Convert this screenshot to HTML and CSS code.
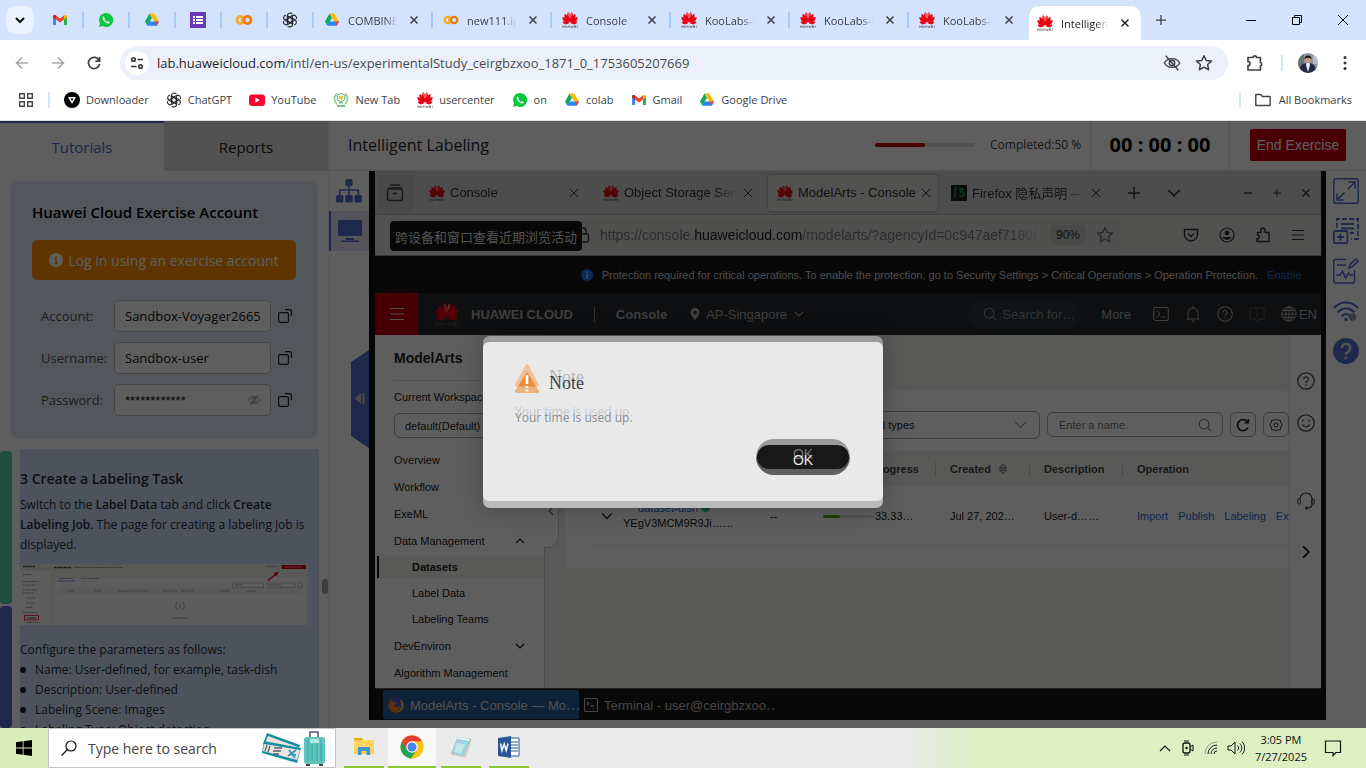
FILE: index.html
```html
<!DOCTYPE html>
<html lang="en">
<head>
<meta charset="utf-8">
<meta name="viewport" content="width=device-width, initial-scale=1">
<title>Intelligent Labeling</title>
<link rel="stylesheet" href="styles.css">
</head>
<body>
<svg class="defs" aria-hidden="true">
  <symbol id="huawei" viewBox="0 0 24 24">
    <g fill="#e60012">
      <path d="M11.700 16C7.800 12 6.200 4 9.200 .5C12.300 1.500 12.400 9 11.700 16z"/>
      <path d="M12.300 16C16.200 12 17.800 4 14.800 .5C11.700 1.500 11.600 9 12.300 16z"/>
      <path d="M11 16.200C6.500 14.500 2.200 8 4 3C8 3.800 10.500 10 11 16.200z"/>
      <path d="M13 16.200C17.500 14.500 21.800 8 20 3C16 3.800 13.500 10 13 16.200z"/>
      <path d="M10.400 16.800C5.500 17 .2 12.500 .5 7.500C5 7.800 8.800 12 10.400 16.800z"/>
      <path d="M13.600 16.800C18.500 17 23.800 12.500 23.500 7.500C19 7.800 15.200 12 13.600 16.800z"/>
      <path d="M10.200 17.300C6.600 19.400 2.600 18.600 .8 14.500C4.400 13.600 8 15 10.200 17.300z"/>
      <path d="M13.800 17.300C17.400 19.400 21.400 18.600 23.200 14.500C19.600 13.600 16 15 13.800 17.300z"/>
    </g>
    <path d="M9.600 1.500C11.300 3 11.800 7 11.700 10C10 7 9.200 4.500 9.600 1.500zM14.400 1.500C12.700 3 12.200 7 12.300 10C14 7 14.800 4.500 14.400 1.500z" fill="#ff9a80"/>
    <path d="M1 20.500v3M1 22h2.500M3.500 20.500v3M5.500 20.500v2.500h2v-2.500M9 23.500l1.300-3 1.300 3M13 20.500l1 3 1-2 1 2 1-3M21 20.500h-2.300v3H21M18.700 22H21M23 20.500v3" fill="none" stroke="#555" stroke-width=".9"/>
  </symbol>
  <symbol id="gmail" viewBox="0 0 16 16"><path d="M1 3v10h3V7z" fill="#4285f4"/><path d="M15 3v10h-3V7z" fill="#34a853"/><path d="M1 4.500C1 3 2.800 2.500 4 3.400l4 3 4-3v4l-4 3-4-3-3-2.200z" fill="#ea4335"/><path d="M12 3.400c1.200-.9 3-.4 3 1.100v.7l-3 2.200z" fill="#fbbc04"/><path d="M1 4.500v.8l3 2.200v-4C2.800 2.500 1 3 1 4.500z" fill="#c5221f"/></symbol>
  <symbol id="whatsapp" viewBox="0 0 16 16"><path d="M8 1a7 7 0 0 0-6 10.500L1 15l3.600-1A7 7 0 1 0 8 1z" fill="#0ac63c"/><path d="M5.500 4.300c-.9.600-1.200 1.600-.6 2.900.9 2 2.500 3.600 4.700 4.200 1.100.2 2-.4 2.100-1.500L9.900 9l-.8.900C7.800 9.400 6.900 8.500 6.300 7.200L7 6.400z" fill="#fff"/></symbol>
  <symbol id="drive" viewBox="0 0 16 16"><path d="M5.500 1.500L1 9.500l2.300 4.200L8 5.700z" fill="#11a861"/><path d="M5.500 1.500h4.800l4.700 8h-4.700z" fill="#fdba00"/><path d="M5.600 9.500H15l-2.300 4.200H3.300z" fill="#2684fc"/><path d="M10.400 9.500H15l-2.300 4.200z" fill="#ea4335"/></symbol>
  <symbol id="colab" viewBox="0 0 18 16"><circle cx="5.500" cy="8" r="3.600" fill="none" stroke="#f9a81c" stroke-width="2.600"/><circle cx="12.500" cy="8" r="3.600" fill="none" stroke="#ea7a0c" stroke-width="2.600"/><path d="M8 5a4.800 4.800 0 0 0 0 6" stroke="#f9a81c" stroke-width="2" fill="none"/></symbol>
  <symbol id="gpt" viewBox="0 0 16 16"><g fill="none" stroke="#222" stroke-width="1.100"><path d="M5.300 6.400V3.700a2.900 2.900 0 0 1 5-1.800M5.300 3.700l5 2.900v3.300"/><path d="M5.300 6.400V3.700a2.900 2.900 0 0 1 5-1.800M5.300 3.700l5 2.900v3.300" transform="rotate(60 8 8)"/><path d="M5.300 6.400V3.700a2.900 2.900 0 0 1 5-1.800M5.300 3.700l5 2.900v3.300" transform="rotate(120 8 8)"/><path d="M5.300 6.400V3.700a2.900 2.900 0 0 1 5-1.800M5.300 3.700l5 2.900v3.300" transform="rotate(180 8 8)"/><path d="M5.300 6.400V3.700a2.900 2.900 0 0 1 5-1.800M5.300 3.700l5 2.900v3.300" transform="rotate(240 8 8)"/><path d="M5.300 6.400V3.700a2.900 2.900 0 0 1 5-1.800M5.300 3.700l5 2.900v3.300" transform="rotate(300 8 8)"/></g></symbol>
  <symbol id="x" viewBox="0 0 10 10"><path d="M1.500 1.500l7 7M8.500 1.500l-7 7" fill="none" stroke="currentColor" stroke-width="1.500"/></symbol>
  <symbol id="xthin" viewBox="0 0 10 10"><path d="M1 1l8 8M9 1l-8 8" fill="none" stroke="currentColor"/></symbol>
  <symbol id="down" viewBox="0 0 10 10"><path d="M1 3l4 4 4-4" fill="none" stroke="currentColor" stroke-width="1.200"/></symbol>
  <symbol id="down-bold" viewBox="0 0 12 12"><path d="M2 4l4 4 4-4" fill="none" stroke="currentColor" stroke-width="2"/></symbol>
  <symbol id="plus" viewBox="0 0 12 12"><path d="M6 0v12M0 6h12" fill="none" stroke="currentColor" stroke-width="1.500"/></symbol>
  <symbol id="search" viewBox="0 0 16 16"><circle cx="7" cy="7" r="5.500" fill="none" stroke="currentColor" stroke-width="1.200"/><path d="M11 11l4 4" stroke="currentColor" stroke-width="1.200"/></symbol>
  <symbol id="copy" viewBox="0 0 14 14"><rect x=".6" y="3.600" width="9.800" height="9.800" rx="1.500" fill="none" stroke="currentColor" stroke-width="1.200"/><path d="M7 .6h5a1.400 1.400 0 0 1 1.400 1.400v5" fill="none" stroke="currentColor" stroke-width="1.200"/></symbol>
  <symbol id="eyeoff" viewBox="0 0 20 20"><g fill="none" stroke="currentColor" stroke-width="1.600"><path d="M1.500 10C5 3.500 15 3.500 18.500 10 15 16.500 5 16.500 1.500 10z"/><circle cx="10" cy="10" r="3"/><path d="M3 2l14 16"/></g></symbol>
  <symbol id="eyeoff-thin" viewBox="0 0 20 20"><g fill="none" stroke="currentColor" stroke-width="1.400"><path d="M1 10C5 3.500 15 3.500 19 10 15 16.500 5 16.500 1 10z"/><circle cx="10" cy="10" r="3"/><path d="M16 2L4 18"/></g></symbol>
  <symbol id="star" viewBox="0 0 16 16"><path d="M8 1.500l2 4.300 4.700.5-3.500 3.100 1 4.600L8 11.700 3.800 14l1-4.600L1.300 6.300 6 5.800z" fill="none" stroke="currentColor" stroke-width="1.300" stroke-linejoin="round"/></symbol>
  <symbol id="help" viewBox="0 0 18 18"><circle cx="9" cy="9" r="8.200" fill="none" stroke="currentColor" stroke-width="1.200"/><path d="M6.700 7.200a2.300 2.300 0 1 1 3.400 2c-.8.500-1.100.9-1.100 1.700M9 12.300v1.300" fill="none" stroke="currentColor" stroke-width="1.200"/></symbol>
</svg>

<header class="chrome">
  <div class="tabstrip">
    <button class="tab-search" aria-label="Search tabs"><svg class="i12"><use href="#down-bold"/></svg></button>
    <a class="pin" href="#" aria-label="Gmail"><svg class="i16"><use href="#gmail"/></svg></a>
    <a class="pin" href="#" aria-label="WhatsApp"><svg class="i16"><use href="#whatsapp"/></svg></a>
    <a class="pin" href="#" aria-label="Drive"><svg class="i16"><use href="#drive"/></svg></a>
    <a class="pin" href="#" aria-label="Forms"><svg class="i16" viewBox="0 0 16 16"><path d="M0 0h16v16H0z" fill="#673ab7"/><path d="M3 4h2v2H3zM3 7h2v2H3zM3 10h2v2H3zM6 4h7v2H6zM6 7h7v2H6zM6 10h7v2H6z" fill="#fff"/></svg></a>
    <a class="pin" href="#" aria-label="Colab"><svg class="i18"><use href="#colab"/></svg></a>
    <a class="pin" href="#" aria-label="ChatGPT"><svg class="i16"><use href="#gpt"/></svg></a>
    <div class="tab"><svg class="i16"><use href="#drive"/></svg><span>COMBINED</span><button aria-label="Close"><svg class="i10"><use href="#x"/></svg></button></div>
    <div class="tab"><svg class="i16"><use href="#colab"/></svg><span>new111.ipynb</span><button aria-label="Close"><svg class="i10"><use href="#x"/></svg></button></div>
    <div class="tab"><svg class="i16"><use href="#huawei"/></svg><span>Console</span><button aria-label="Close"><svg class="i10"><use href="#x"/></svg></button></div>
    <div class="tab"><svg class="i16"><use href="#huawei"/></svg><span>KooLabs-H</span><button aria-label="Close"><svg class="i10"><use href="#x"/></svg></button></div>
    <div class="tab"><svg class="i16"><use href="#huawei"/></svg><span>KooLabs-H</span><button aria-label="Close"><svg class="i10"><use href="#x"/></svg></button></div>
    <div class="tab last"><svg class="i16"><use href="#huawei"/></svg><span>KooLabs-H</span><button aria-label="Close"><svg class="i10"><use href="#x"/></svg></button></div>
    <div class="tab current"><svg class="i16"><use href="#huawei"/></svg><span>Intelligent</span><button aria-label="Close"><svg class="i10"><use href="#x"/></svg></button></div>
    <button class="new-tab" aria-label="New tab"><svg class="i10"><use href="#plus"/></svg></button>
    <div class="window-buttons">
      <button aria-label="Minimize"><svg class="i10" viewBox="0 0 10 10"><path d="M0 5.500h10" stroke="#000"/></svg></button>
      <button aria-label="Restore"><svg class="i10" viewBox="0 0 10 10"><path d="M.5 2.500h7v7h-7zM2.500 2.500v-2h7v7h-2" fill="none" stroke="#000"/></svg></button>
      <button aria-label="Close window"><svg class="i10" viewBox="0 0 10 10"><path d="M0 0l10 10M10 0L0 10" stroke="#000"/></svg></button>
    </div>
  </div>
  <div class="toolbar">
    <button class="nav off" aria-label="Back"><svg class="i14" viewBox="0 0 14 14"><path d="M13 7H2M7 1.500L1.500 7 7 12.500" fill="none" stroke="currentColor" stroke-width="1.600"/></svg></button>
    <button class="nav off" aria-label="Forward"><svg class="i14" viewBox="0 0 14 14"><path d="M1 7h11M7 1.500L12.500 7 7 12.500" fill="none" stroke="currentColor" stroke-width="1.600"/></svg></button>
    <button class="nav" aria-label="Reload"><svg class="i14" viewBox="0 0 14 14"><path d="M12 4.300A5.600 5.600 0 1 0 12.600 8M12.600 1v4.200H8.400" fill="none" stroke="currentColor" stroke-width="1.700"/></svg></button>
    <div class="omnibox">
      <button class="site-info" aria-label="Site information"><svg class="i14" viewBox="0 0 14 14"><g fill="none" stroke="#333" stroke-width="1.600"><circle cx="3.500" cy="3.500" r="1.800"/><path d="M7.500 3.500H13M1 10.500h5.500"/><circle cx="10.500" cy="10.500" r="1.800"/></g></svg></button>
      <span class="url">lab.huaweicloud.com<i>/intl/en-us/experimentalStudy_ceirgbzxoo_1871_0_1753605207669</i></span>
      <button aria-label="Third-party cookies blocked"><svg class="i18"><use href="#eyeoff"/></svg></button>
      <button aria-label="Bookmark"><svg class="i18"><use href="#star"/></svg></button>
    </div>
    <button class="ext" aria-label="Extensions"><svg class="i18" viewBox="0 0 18 18"><path d="M2 3.500h5a1.700 1.700 0 0 1 3.400 0h4v5a1.700 1.700 0 0 1 0 3.300v4.200H2v-4.300a2 2 0 0 0 0-4z" fill="none" stroke="#444" stroke-width="1.700" stroke-linejoin="round"/></svg></button>
    <button class="avatar" aria-label="Profile"><svg class="i20" viewBox="0 0 20 20"><clipPath id="face"><circle cx="10" cy="10" r="10"/></clipPath><g clip-path="url(#face)"><path d="M0 0h20v20H0z" fill="#8d979f"/><path d="M0 0h6v14H0z" fill="#66717a"/><path d="M15 2h5v9h-5z" fill="#b5bec6"/><path d="M1 20c0-7 3-10 9-10s8 3 8 10z" fill="#202b42"/><path d="M8.500 10h3l.5 2-2 7-2-7z" fill="#e8eef5"/><circle cx="10" cy="6.500" r="3.200" fill="#c8957c"/><path d="M6.500 6.500C6 1 14 1 13.500 6.500c-1-2.500-6-2.500-7 0z" fill="#1b1714"/></g></svg></button>
    <button class="kebab" aria-label="Menu"><svg class="i16" viewBox="0 0 16 16" fill="#333"><circle cx="8" cy="2.500" r="1.500"/><circle cx="8" cy="8" r="1.500"/><circle cx="8" cy="13.500" r="1.500"/></svg></button>
  </div>
  <nav class="bookmarks">
    <button class="apps" aria-label="Apps"><svg class="i14" viewBox="0 0 14 14"><path d="M.7.700h4.600v4.600H.7zM8.700.7h4.600v4.600H8.700zM.7 8.700h4.600v4.600H.7zM8.700 8.700h4.600v4.600H8.700z" fill="none" stroke="#444" stroke-width="1.400"/></svg></button>
    <a href="#"><svg class="i16" viewBox="0 0 16 16"><circle cx="8" cy="8" r="8"/><path d="M4 5h8l-4 7z" fill="#fff"/><path d="M6.500 6.500h3L8 9z"/></svg>Downloader</a>
    <a href="#"><svg class="i16"><use href="#gpt"/></svg>ChatGPT</a>
    <a href="#"><svg class="i16" viewBox="0 0 16 16"><rect y="2.500" width="16" height="11.500" rx="3" fill="#ff0033"/><path d="M6.300 5.500v5.200l4.500-2.600z" fill="#fff"/></svg>YouTube</a>
    <a href="#"><svg class="i16" viewBox="0 0 16 16" fill="none"><path d="M4 1.500C.5 4 .8 9 4 12.500M12 1.500c3.500 2.500 3.200 7.500 0 11" stroke="#8fcb9c" stroke-width="1.600"/><circle cx="8" cy="5.500" r="4" stroke="#58ac70"/><path d="M6 4h4v2.500L8 8 6 6.500z" fill="#e5c63c"/><path d="M6 10h4v1.500H6zM4 13h8v2H4z" fill="#81bd92"/></svg>New Tab</a>
    <a href="#"><svg class="i16"><use href="#huawei"/></svg>usercenter</a>
    <a href="#"><svg class="i16"><use href="#whatsapp"/></svg>on</a>
    <a href="#"><svg class="i16"><use href="#drive"/></svg>colab</a>
    <a href="#"><svg class="i16"><use href="#gmail"/></svg>Gmail</a>
    <a href="#"><svg class="i16"><use href="#drive"/></svg>Google Drive</a>
    <a class="all" href="#"><svg class="i16" viewBox="0 0 16 16"><path d="M.8 2.500h5l1.700 2h7.700v9H.8z" fill="none" stroke="#444" stroke-width="1.400" stroke-linejoin="round"/></svg>All Bookmarks</a>
  </nav>
</header>

<main class="lab">
  <aside class="guide">
    <div class="guide-tabs"><button class="on">Tutorials</button><button>Reports</button></div>
    <section class="account">
      <h2>Huawei Cloud Exercise Account</h2>
      <button class="login"><svg class="i14" viewBox="0 0 14 14"><circle cx="7" cy="7" r="7" fill="#fff"/><path d="M7 3v1.700M5.500 6H7v4.500M5.300 10.500h3.400" stroke="#ff9000" stroke-width="1.500" fill="none"/></svg>Log in using an exercise account</button>
      <div class="field"><label for="acc">Account:</label><input id="acc" value="Sandbox-Voyager2665"><button aria-label="Copy account"><svg class="i14"><use href="#copy"/></svg></button></div>
      <div class="field"><label for="usr">Username:</label><input id="usr" value="Sandbox-user"><button aria-label="Copy username"><svg class="i14"><use href="#copy"/></svg></button></div>
      <div class="field"><label for="pwd">Password:</label><span class="secret"><input id="pwd" value="************"><svg class="i14"><use href="#eyeoff-thin"/></svg></span><button aria-label="Copy password"><svg class="i14"><use href="#copy"/></svg></button></div>
    </section>
    <div class="steps">
      <div class="rail"><i class="done"></i><i class="now"></i></div>
      <article class="step">
        <h3>3 Create a Labeling Task</h3>
        <p>Switch to the <b>Label Data</b> tab and click <b>Create Labeling Job</b>. The page for creating a labeling job is displayed.</p>
        <svg class="shot" viewBox="0 0 288 61" role="img" aria-label="Data Labeling page">
          <path d="M0 0h288v61H0z" fill="#f1f4ec"/><path d="M0 0h30v61H0zM35 14h250v47H35z" fill="#fcfcfc"/>
          <path d="M0 0h288v7H0z" fill="#eef2e6"/><path d="M38 24h244v6H38z" fill="#f0f3ee"/>
          <path d="M3 2.500h12M34 3.500h17" stroke="#444" stroke-width="1.500" stroke-dasharray="2 .5"/>
          <path d="M54 3.500h49M3 10.500h8M3 17.500h16M3 21h12M3 26h14M3 29h10M6 34h9M6 39h9M6 43.500h6M3 48.500h15M6 58.500h14M39 14.500h14M61 14.500h18M48 27h6M75 27h7M98 27h31M143 27h14M161 27h12M200 27h10M227 27h9M152 54h16M247 2.500h11" stroke="#8d918d" stroke-width="1" stroke-dasharray="1.500 .7"/>
          <rect x="261.500" y="1" width="24.500" height="4" fill="#e0001a"/><path d="M265 3h17" stroke="#ffb0b0" stroke-width=".7"/>
          <rect x="4.500" y="51.500" width="14" height="4.500" fill="none" stroke="#e33"/><path d="M7 54h9" stroke="#555"/>
          <path d="M248 16.500l8-6.500" stroke="#e01020" stroke-width="1.300"/><path d="M259 7.500l-2.500 5-3-3.500z" fill="#e01020"/>
          <g fill="none" stroke="#aaa" stroke-width=".6"><path d="M212.500 19h31v4.500h-31zM247 19h28v4.500h-28zM278 19h4.500v4.500H278z"/><path d="M158 39h-2v6h2M162 39h2v6h-2M160 39.500v5" stroke-width="1"/></g>
          <path d="M37 17h18" stroke="#7a9bea"/><path d="M215 21h8M249 21h12" stroke="#999" stroke-width=".8"/>
        </svg>
        <p class="cfg">Configure the parameters as follows:</p>
        <ul><li>Name: User-defined, for example, task-dish</li><li>Description: User-defined</li><li>Labeling Scene: Images</li><li>Labeling Type: Object detection</li></ul>
      </article>
      <div class="thumb"></div>
    </div>
  </aside>

  <section class="work">
    <div class="work-head">
      <h1>Intelligent Labeling</h1>
      <div class="progress"><i style="width:50%"></i></div>
      <span class="completed">Completed:50 %</span>
      <time class="timer">00 : 00 : 00</time>
      <button class="end">End Exercise</button>
    </div>
    <div class="work-body">
      <div class="side">
        <button aria-label="Topology"><svg class="i26" viewBox="0 0 26 26" fill="currentColor"><rect x="9.500" y="1" width="7" height="7" rx="1.500"/><rect y="17" width="7.500" height="7.500" rx="1.500"/><rect x="9.300" y="17" width="7.500" height="7.500" rx="1.500"/><rect x="18.500" y="17" width="7.500" height="7.500" rx="1.500"/><path d="M13 8v9M3.700 17v-5h18.600v5" fill="none" stroke="currentColor" stroke-width="1.600"/></svg></button>
        <button class="on" aria-label="Desktop"><svg class="i26" viewBox="0 0 26 26" fill="currentColor"><rect x="1" y="2" width="24" height="16" rx="1.500"/><path d="M9 20h8v2H9zM4 22.500h18V24H4z"/></svg></button>
        <button class="collapse" aria-label="Collapse"><svg viewBox="0 0 18 98"><path d="M0 12L18 0v98L0 86z" fill="#526ecc"/><path d="M10 43v11l-6-5.500z" fill="#ccc"/><path d="M12.500 43v11" stroke="#ccc" stroke-width="2"/></svg></button>
      </div>

      <div class="stage">
        <div class="ff-tabs">
          <button class="ff-view" aria-label="Recent browsing"><svg class="i18" viewBox="0 0 18 18"><path d="M4 1h10M2.500 4h13" stroke="#444" stroke-width="1.500"/><rect x="1.500" y="5" width="15" height="11.500" rx="2" fill="none" stroke="#444" stroke-width="1.500"/><path d="M7 9.500h4" stroke="#444" stroke-width="1.500"/></svg></button>
          <div class="ff-tab"><svg class="i16"><use href="#huawei"/></svg><span>Console</span><svg class="i10"><use href="#xthin"/></svg></div>
          <div class="ff-tab"><svg class="i16"><use href="#huawei"/></svg><span>Object Storage Service</span><svg class="i10"><use href="#xthin"/></svg></div>
          <div class="ff-tab on"><svg class="i16"><use href="#huawei"/></svg><span>ModelArts - Console</span><svg class="i10"><use href="#xthin"/></svg></div>
          <div class="ff-tab"><svg class="i16" viewBox="0 0 16 16"><path d="M0 0h16v16H0z" fill="#202020"/><path d="M4 3v10M4 3h2M8 4h4L9.500 7H11a2 2 0 0 1 0 4H8" fill="none" stroke="#1c9a3c" stroke-width="1.400"/></svg><span>Firefox 隐私声明 — Mozilla</span><svg class="i10"><use href="#xthin"/></svg></div>
          <button class="ff-btn" aria-label="New tab"><svg class="i12"><use href="#plus"/></svg></button>
          <button class="ff-btn" aria-label="List tabs"><svg class="i14"><use href="#down"/></svg></button>
          <div class="ff-win"><svg class="i10" viewBox="0 0 10 10"><path d="M1 5h8" stroke="#444" stroke-width="1.500"/></svg><svg class="i8"><use href="#plus"/></svg><svg class="i10"><use href="#x"/></svg></div>
        </div>
        <div class="ff-bar">
          <div class="tip">跨设备和窗口查看近期浏览活动</div>
          <div class="ff-url"><svg class="i16" viewBox="0 0 16 16"><rect x="2.500" y="7" width="11" height="8" rx="1.500" fill="none" stroke="#333" stroke-width="1.300"/><path d="M5 7V4a3 3 0 0 1 6 0v3" fill="none" stroke="#333" stroke-width="1.300"/></svg><span>https://console.<b>huaweicloud.com</b>/modelarts/?agencyId=0c947aef7180f</span><em>90%</em><svg class="i18"><use href="#star"/></svg></div>
          <div class="ff-tools">
            <svg class="i16" viewBox="0 0 16 16"><path d="M1.500 2.500h13v5a6.500 6.500 0 0 1-13 0zM5 6.500l3 3 3-3" fill="none" stroke="#333" stroke-width="1.400"/></svg>
            <svg class="i16" viewBox="0 0 16 16"><circle cx="8" cy="8" r="7" fill="none" stroke="#333" stroke-width="1.200"/><circle cx="8" cy="6" r="2.400" fill="#333"/><path d="M3.500 10h9c-1 3.500-8 3.500-9 0z" fill="#333"/></svg>
            <svg class="i16" viewBox="0 0 16 16"><path d="M2 14.500h12V5.500h-4V3a2 2 0 0 0-4 0v2.500H2.500v2.700a1.800 1.800 0 1 1-.5 3.500z" fill="none" stroke="#333" stroke-width="1.400" stroke-linejoin="round"/></svg>
            <svg class="i14" viewBox="0 0 14 14"><path d="M1 2.500h12M1 7h12M1 11.500h12" stroke="#333" stroke-width="1.200"/></svg>
          </div>
        </div>
        <div class="notice"><svg class="i12" viewBox="0 0 12 12"><circle cx="6" cy="6" r="6" fill="#1c6fe8"/><path d="M6 2.500v1.200M6 5v4.500" stroke="#fff" stroke-width="1.200"/></svg><span>Protection required for critical operations. To enable the protection, go to Security Settings &gt; Critical Operations &gt; Operation Protection.</span><a href="#">Enable</a></div>
        <div class="hc-head">
          <button class="burger" aria-label="Services"><svg class="i14" viewBox="0 0 14 14"><path d="M0 1.500h14M0 7h14M0 12.500h14" stroke="#ddd" stroke-width="1.200"/></svg></button>
          <svg class="i24"><use href="#huawei"/></svg>
          <b class="brand">HUAWEI CLOUD</b><b class="console">Console</b>
          <span class="region"><svg class="i12" viewBox="0 0 12 12"><path d="M6 0a4.600 4.600 0 0 1 4.600 4.600C10.600 7.500 6 12 6 12S1.400 7.500 1.400 4.600A4.600 4.600 0 0 1 6 0z" fill="#aaa"/><circle cx="6" cy="4.600" r="1.800" fill="#27292d"/></svg>AP-Singapore<svg class="i10"><use href="#down"/></svg></span>
          <span class="hc-search"><svg class="i14"><use href="#search"/></svg>Search for…</span>
          <span class="more">More</span>
          <span class="hc-icons">
            <svg class="i16" viewBox="0 0 16 16"><rect x=".7" y="1.500" width="14.600" height="13" rx="1.500" fill="none" stroke="currentColor"/><path d="M4 5l3 3-3 3M8.500 11H12" fill="none" stroke="currentColor"/></svg>
            <svg class="i16" viewBox="0 0 16 16"><path d="M1.500 13h13M3 13V7a5 5 0 0 1 10 0v6M6.500 15h3M8 0v2" fill="none" stroke="currentColor"/></svg>
            <svg class="i16"><use href="#help"/></svg>
            <svg class="i16 faint" viewBox="0 0 16 16"><path d="M1 2h14v11H9.500L8 15l-1.500-2H1zM8 5v1M8 7v4" fill="none" stroke="currentColor"/></svg>
          </span>
          <span class="lang"><svg class="i16" viewBox="0 0 16 16"><g fill="none" stroke="currentColor"><circle cx="8" cy="8" r="7.200"/><ellipse cx="8" cy="8" rx="3.300" ry="7.200"/><path d="M1 8h14M2 4.500h12M2 11.500h12M8 1v14"/></g></svg>EN</span>
        </div>
        <div class="ma">
          <nav class="ma-nav">
            <h2>ModelArts</h2>
            <label for="ws">Current Workspace</label>
            <select id="ws"><option>default(Default)</option></select>
            <a href="#">Overview</a><a href="#">Workflow</a><a href="#">ExeML</a>
            <a href="#">Data Management<svg class="i10 up"><use href="#down"/></svg></a>
            <a class="sub on" href="#">Datasets</a><a class="sub" href="#">Label Data</a><a class="sub" href="#">Labeling Teams</a>
            <a href="#">DevEnviron<svg class="i10"><use href="#down"/></svg></a><a href="#">Algorithm Management</a>
            <button class="fold" aria-label="Fold menu"><svg class="i10"><use href="#down"/></svg></button>
          </nav>
          <div class="ma-main">
            <div class="card">
              <div class="filters">
                <select aria-label="Type"><option>All types</option></select>
                <span class="find"><input placeholder="Enter a name." aria-label="Name"><svg class="i14"><use href="#search"/></svg></span>
                <button aria-label="Refresh"><svg class="i14" viewBox="0 0 14 14"><path d="M11.500 4A5.500 5.500 0 1 0 12 9.500M12.300 1v4H8.500" fill="none" stroke="#222" stroke-width="1.700"/></svg></button>
                <button aria-label="Settings"><svg class="i14" viewBox="0 0 14 14"><path d="M7 1l1.800 1.300 2.300-.2.700 2.200L13 7l-1.200 2.700-.7 2.200-2.300-.2L7 13l-1.800-1.300-2.300.2-.7-2.200L1 7l1.200-2.700.7-2.200 2.300.2z" fill="none" stroke="#333"/><circle cx="7" cy="7" r="2" fill="none" stroke="#333"/></svg></button>
              </div>
              <table>
                <colgroup><col class="c1"><col class="c2"><col class="c3"><col class="c4"><col class="c5"><col></colgroup>
                <thead><tr><th>Name</th><th>Tag</th><th>Labeling Progress</th><th>Created <svg class="i10" viewBox="0 0 10 10"><path d="M1.500 4L5 .5 8.500 4zM1.500 6L5 9.500 8.500 6z" fill="none" stroke="#555"/></svg></th><th>Description</th><th>Operation</th></tr></thead>
                <tbody><tr>
                  <td><div class="name"><svg class="i12"><use href="#down"/></svg><span><a href="#">dataset-dish</a> <i class="dot"></i><br>YEgV3MCM9R9Ji……</span></div></td>
                  <td>--</td>
                  <td><div class="prog"><div class="bar"><i style="width:33%"></i></div>33.33…</div></td>
                  <td>Jul 27, 202…</td><td>User-d……</td>
                  <td class="ops"><a href="#">Import</a><a href="#">Publish</a><a href="#">Labeling</a><a href="#">Export</a></td>
                </tr></tbody>
              </table>
            </div>
          </div>
          <div class="ma-rail">
            <svg class="i18"><use href="#help"/></svg>
            <svg class="i18 smile" viewBox="0 0 18 18"><circle cx="9" cy="9" r="8.200" fill="none" stroke="currentColor" stroke-width="1.200"/><path d="M5.500 10.500c1.500 3 5.500 3 7 0M6 5.500v2M12 5.500v2" fill="none" stroke="currentColor" stroke-width="1.200"/></svg>
            <svg class="i18 head" viewBox="0 0 18 18"><path d="M3 7a6 6 0 0 1 12 0v5c0 3-2 4-5 4" fill="none" stroke="currentColor" stroke-width="1.200"/><rect x=".7" y="7" width="2.600" height="5" rx="1" fill="none" stroke="currentColor"/><rect x="14.700" y="7" width="2.600" height="5" rx="1" fill="none" stroke="currentColor"/><circle cx="9.500" cy="16" r="1.500" fill="currentColor"/></svg>
            <svg class="i14 right"><use href="#down"/></svg>
          </div>
        </div>
        <div class="vm-bar">
          <div class="on"><svg class="i16" viewBox="0 0 16 16"><circle cx="8" cy="8" r="7.500" fill="#3c62d0"/><path d="M.5 6C1 4 2 3 3 2l1 2.500C6 4 8 5 8.500 6.500 7 7 6 8 7 9.500c2 1.500 4 .5 4.500-1.500 1 3-1 5-3.500 5 4 .5 6-2 6-6l1.500 1C15.500 13 12 15.800 8 15.800 3 15.800-.5 11 .5 6z" fill="#ff7a1c"/><path d="M12 2c3 1.500 4 5 3.300 8-.8 3-3 5-6 5.500 4-2 5-6 2.700-13.500z" fill="#ffc02c"/></svg>ModelArts - Console — Mo⋯</div>
          <div><svg class="i14" viewBox="0 0 14 14"><path d="M.5.500h13v13H.5z" fill="#222" stroke="#bbb"/><path d="M3 4l2 1.500L3 7M6.500 8h3" fill="none" stroke="#fff"/></svg>Terminal - user@ceirgbzxoo⋯</div>
        </div>
      </div>

      <div class="tools">
        <button aria-label="Full screen"><svg class="i26" viewBox="0 0 26 26"><g fill="none" stroke="currentColor" stroke-width="1.500"><rect x=".8" y=".8" width="24.400" height="24.400" rx="2"/><path d="M14.500 11.500L22 4M15.500 4H22v6.500M11.500 14.500L4 22M4 15.500V22h6.500"/></g></svg></button>
        <button aria-label="Add task"><svg class="i26" viewBox="0 0 26 26"><g fill="none" stroke="currentColor" stroke-width="1.800"><path d="M4 10V1h21v20h-7" stroke-dasharray="5 2"/><path d="M8 6h13M8 10.500h13M17 15h4"/><rect x=".9" y="13" width="13.500" height="12.200" rx="1.500"/><path d="M7.500 15.500v7M4 19h7"/></g></svg></button>
        <button aria-label="Notes"><svg class="i26" viewBox="0 0 26 26"><g fill="none" stroke="currentColor" stroke-width="1.500"><path d="M13 1.500H2.500A1.700 1.700 0 0 0 .8 3.200v20a1.700 1.700 0 0 0 1.700 1.700h17.300a1.700 1.700 0 0 0 1.700-1.700V12M4 7h9M3 17h4l2.500-4 3 7 3-5 1.500 2h3"/><path d="M16 10l1-3.500L23 .8l2.200 2.200L19 9z"/></g></svg></button>
        <button aria-label="Network"><svg class="i26" viewBox="0 0 26 26"><g fill="none" stroke="currentColor" stroke-width="2"><path d="M1 10c7-7.500 17-7.500 24 0M4.500 14.500c5-5.500 12-5.500 17 0M8.500 18.500c2.500-3 6-3 9-.5"/></g><circle cx="13" cy="21.500" r="1.700" fill="currentColor"/><circle cx="19.500" cy="19" r="3.800" fill="#999"/></svg></button>
        <button aria-label="Help"><svg class="i26" viewBox="0 0 26 26"><circle cx="13" cy="13" r="13" fill="currentColor"/><path d="M8.800 10a4.200 4.200 0 1 1 6.200 3.700c-1.400.8-2 1.400-2 3M13 18.500v2.700" fill="none" stroke="#ddd" stroke-width="2.400"/></svg></button>
      </div>
    </div>
  </section>

  <div class="overlay">
    <div class="note" role="alertdialog" aria-labelledby="note-t" aria-describedby="note-d">
      <div class="note-body">
        <div class="note-head"><svg class="warn" viewBox="0 0 24 30"><path d="M12 1.500L22.500 21h-21z" fill="#f0c29a" stroke="#f0c29a" stroke-width="3" stroke-linejoin="round"/><path d="M12 8.500L22.500 27.500h-21z" fill="#eeb27c" stroke="#eeb27c" stroke-width="3" stroke-linejoin="round"/><path d="M12 8L21 22.500H3z" fill="#e98f3f"/><path d="M12 11v9M12 22v2M12 25.500v2" stroke="#fff" stroke-width="2.600"/></svg><h2 id="note-t">Note</h2></div>
        <p id="note-d">Your time is used up.</p>
        <button class="ok"><span>OK</span></button>
      </div>
    </div>
  </div>
</main>

<footer class="taskbar">
  <button class="start" aria-label="Start"><svg class="i16" viewBox="0 0 16 16"><path d="M0 2.300l6.700-1v6.300H0zM7.500 1.200L16 0v7.600H7.500zM0 8.400h6.700v6.300L0 13.700zM7.500 8.400H16V16l-8.500-1.200z"/></svg></button>
  <label class="find-box"><svg class="i16" viewBox="0 0 16 16"><circle cx="10" cy="6" r="5" fill="none" stroke="#111" stroke-width="1.200"/><path d="M6.500 9.500L.5 15.500" stroke="#111" stroke-width="1.200"/></svg><input placeholder="Type here to search" aria-label="Search">
    <svg class="trip" viewBox="0 0 66 36"><path d="M6 3l33 12-4 10L2 14z" fill="#148e99"/><path d="M7 6l30 11-2 6L4 13z" fill="#eee3dd"/><path d="M3 11l37 7-4 15-35-10z" fill="#1690a0"/><path d="M3 14l36 6-3 10-34-9z" fill="#eee4e0"/><path d="M6 15l-2 6M9 16l-2 6M13 18h8M12 21h8M12 24h6" stroke="#53606a" stroke-width="1.300"/><path d="M28 20l6 8M35 20l-8 6M29 24l6 1" stroke="#3c97b6" stroke-width="2"/><path d="M49 8V2h8v6" fill="none" stroke="#555b70" stroke-width="1.600"/><rect x="43" y="7" width="21" height="27" rx="3" fill="#5cc5bd"/><path d="M47 10v21M51 14v17M56 14v17M60 10v21" stroke="#3a9fa0"/><rect x="49" y="9" width="9" height="4" rx="1" fill="#b7ece6"/><path d="M45 34h4v2h-4zM58 34h4v2h-4z" fill="#444"/></svg></label>
  <a class="app" href="#" aria-label="File Explorer"><svg class="i22" viewBox="0 0 22 22"><path d="M1 2h8l2 3H1z" fill="#e9a820"/><path d="M1 4h20v14H1z" fill="#ffd45e"/><path d="M5 11h12v8h-3.500v-4h-5v4H5z" fill="#3f97dc"/></svg></a>
  <a class="app on" href="#" aria-label="Chrome"><svg class="i24" viewBox="0 0 24 24"><circle cx="12" cy="12" r="11.500" fill="#fbc116"/><path d="M2 6.300A11.500 11.500 0 0 1 22 6.300H12z" fill="#e33b2e"/><path d="M2 6.300A11.500 11.500 0 0 0 11 23.500l5.500-8.700L7 14.500z" fill="#1ea35b"/><path d="M2 6.300l5.400 8.700L12 6.300z" fill="#e33b2e"/><circle cx="12" cy="12" r="5.700" fill="#fff"/><circle cx="12" cy="12" r="4.500" fill="#4285f4"/></svg></a>
  <a class="app" href="#" aria-label="Notepad"><svg class="i24" viewBox="0 0 24 24"><path d="M9 2l13 2-6 18-14-3z" fill="#5f9fb0"/><path d="M9 2l12 2-6 17-13-3z" fill="#9fd3de"/><path d="M9 2l12 2-.6 2L8.300 4z" fill="#eef3f5"/><path d="M2 18l13 3 6-16 1.500 1-5.500 17L2.500 20z" fill="#d8d3c4"/><path d="M8 8l8 1.500-4 9L5 17z" fill="#c3e8ec"/></svg></a>
  <a class="app" href="#" aria-label="Word"><svg class="i24" viewBox="0 0 24 24"><path d="M11 3h11v18H11z" fill="#fff" stroke="#2b579a"/><path d="M14 7h7M14 10h7M14 13h7M14 16h7" stroke="#2b579a"/><path d="M1 3l13-2v22L1 21z" fill="#2b579a"/><path d="M3.500 8.500l1.500 7 2.200-6.500 2 6.500 1.800-7" fill="none" stroke="#fff" stroke-width="1.500"/></svg></a>
  <div class="tray">
    <svg class="i12" viewBox="0 0 12 12"><path d="M1 9l5-5 5 5" fill="none" stroke="#111" stroke-width="1.200"/></svg>
    <svg class="i16" viewBox="0 0 16 16"><rect x="4" y="3" width="7" height="10" rx="2" fill="none" stroke="#111" stroke-width="1.300"/><path d="M5 1h5M5 15h5M11 7l3-2v6l-3-2" fill="none" stroke="#111"/><circle cx="7.500" cy="8" r="1.200"/></svg>
    <svg class="i16" viewBox="0 0 16 16"><g fill="none" stroke="#111"><path d="M2 14A12 12 0 0 1 14 2" stroke="#999"/><path d="M5 14a9 9 0 0 1 9-9M8 14a6 6 0 0 1 6-6M11 14a3 3 0 0 1 3-3"/></g></svg>
    <svg class="i18" viewBox="0 0 18 18"><path d="M1 7h3l4-4v12l-4-4H1zM10.500 6.500c1.500 1.500 1.500 3.500 0 5M12.800 4.500c2.600 2.500 2.600 6.500 0 9M15 2.700c3.500 3.500 3.500 9 0 12.600" fill="none" stroke="#111"/></svg>
    <div class="clock"><span>3:05 PM</span><span>7/27/2025</span></div>
    <svg class="i18" viewBox="0 0 18 18"><path d="M1.500 2h15v11.500H12l-3 3v-3H1.500z" fill="none" stroke="#111" stroke-width="1.200"/></svg>
  </div>
</footer>
</body>
</html>
```

FILE: styles.css
```css
* { box-sizing: border-box; }
html, body { height: 100%; margin: 0; }
body { display: flex; flex-direction: column; overflow: hidden; font-family: "Open Sans", "Noto Sans CJK SC", sans-serif; font-size: 12px; color: #222; background: #fff; }
button { border: 0; background: none; padding: 0; margin: 0; font: inherit; color: inherit; display: flex; align-items: center; justify-content: center; }
a { color: inherit; text-decoration: none; }
h1, h2, h3, p, ul { margin: 0; padding: 0; }
input, select { font: inherit; color: inherit; min-width: 0; }
svg { flex: none; display: block; }
.defs { position: absolute; width: 0; height: 0; }
.i8 { width: 8px; height: 8px; }
.i10 { width: 10px; height: 10px; }
.i12 { width: 12px; height: 12px; }
.i14 { width: 14px; height: 14px; }
.i16 { width: 16px; height: 16px; }
.i18 { width: 18px; height: 18px; }
.i20 { width: 20px; height: 20px; }
.i22 { width: 22px; height: 22px; }
.i24 { width: 24px; height: 24px; }
.i26 { width: 26px; height: 26px; }

/* browser */
.chrome { flex: none; color: #3c3f43; border-bottom: 1px solid #dde1e8; }
.tabstrip { height: 40px; background: #d3e2fd; display: flex; align-items: center; padding-left: 6px; }
.tab-search { width: 28px; height: 28px; border-radius: 9px; background: #eaf1fe; margin-right: 4px; color: #111; }
.pin { width: 46px; height: 16px; display: flex; align-items: center; justify-content: center; border-right: 2px solid #a8c7fa; }
.tab { width: 119px; height: 16px; display: flex; align-items: center; padding: 0 9px 0 10px; border-right: 2px solid #a8c7fa; font-size: 11px; }
.tab span { flex: 1; overflow: hidden; white-space: nowrap; margin: 0 9px 0 8px; mask-image: linear-gradient(90deg, #000 75%, transparent); }
.tab button { width: 16px; }
.tab.last { border-color: transparent; }
.tab.current { width: 112px; height: 34px; margin: 6px 0 0 1px; background: #fff; border: 0; border-radius: 10px 10px 0 0; padding: 0 8px; color: #222; }
.new-tab { width: 40px; height: 28px; }
.window-buttons { margin-left: auto; display: flex; }
.window-buttons button { width: 46px; height: 40px; }
.toolbar { height: 46px; display: flex; align-items: center; padding: 0 10px 0 4px; }
.nav { width: 36px; height: 30px; }
.off { color: #aaa; }
.omnibox { flex: 1; height: 34px; margin-left: 8px; border-radius: 17px; background: #ecf0fa; display: flex; align-items: center; gap: 14px; padding: 0 15px 0 5px; }
.site-info { width: 24px; height: 24px; border-radius: 50%; background: #fff; }
.url { flex: 1; font-size: 13px; color: #1f1f1f; margin-left: -6px; }
.url i { font-style: normal; color: #474a50; }
.ext { width: 53px; }
.avatar { width: 52px; height: 16px; border-left: 2px solid #d3e2fd; }
.kebab { width: 23px; }
.bookmarks { height: 34px; display: flex; align-items: center; gap: 17px; padding: 0 14px 7px 19px; font-size: 11px; }
.bookmarks a { display: flex; align-items: center; gap: 6px; }
.apps { height: 16px; padding-right: 15px; border-right: 2px solid #d3e2fd; margin-right: -3px; }
.bookmarks .all { margin-left: auto; padding-left: 14px; border-left: 2px solid #d3e2fd; gap: 8px; }

/* lab page */
.lab { flex: 1; min-height: 0; position: relative; display: flex; background: #fff; }
.guide { width: 329px; flex: none; display: flex; flex-direction: column; border-right: 1px solid #eee; min-height: 0; }
.guide-tabs { display: flex; height: 50px; flex: none; font-size: 15px; }
.guide-tabs button { flex: 1; background: #dedede; border-top: 2px solid transparent; }
.guide-tabs .on { background: #fff; color: #526ecc; border-color: #526ecc; }
.account { margin: 10px 10px 0; padding: 20px 22px 22px; border-radius: 8px; background: #e1ebf8; }
.account h2 { font-size: 15px; line-height: 22px; font-weight: 600; margin-bottom: 17px; color: #000; }
.login { width: 100%; max-width: 264px; height: 40px; background: #ff9000; color: #fff; border-radius: 6px; font-size: 14px; gap: 5px; margin-bottom: 20px; }
.field { display: flex; align-items: center; height: 32px; margin-bottom: 10px; padding-left: 9px; font-size: 13px; color: #555; }
.field label { width: 73px; }
.field input { width: 157px; height: 32px; border: 1px solid #bbb; border-radius: 5px; background: #fff; padding: 0 0 0 10px; color: #111; }
.field button { margin-left: 7px; color: #222; }
.secret { display: flex; align-items: center; position: relative; }
.secret input { font-family: "Liberation Sans", sans-serif; }
.secret svg { position: absolute; right: 10px; color: #999; }
.account .field:last-child { margin-bottom: 0; }
.steps { flex: 1; min-height: 0; margin-top: 11px; display: flex; overflow: hidden; }
.rail { width: 12px; flex: none; display: flex; flex-direction: column; gap: 2px; padding-top: 2px; }
.rail i { border-radius: 4px; }
.done { height: 153px; background: #50d4ab; }
.now { flex: 1; background: #526ecc; }
.step { width: 299px; flex: none; margin-left: 8px; background: #d4dffd; line-height: 20px; color: #252b3a; align-self: flex-start; }
.step h3 { font-size: 14px; font-weight: 600; padding: 20px 0 6px; }
.step b { font-weight: 600; }
.shot { width: 288px; height: 61px; margin: 9px 0 15px; }
.step ul { list-style: none; }
.step li { display: flex; align-items: center; gap: 9px; }
.step li::before { content: ""; width: 6px; height: 6px; border-radius: 50%; background: #222; }
.thumb { width: 6px; height: 15px; flex: none; margin: 130px 0 0 3px; border-radius: 3px; background: #a8a8a8; }
.work { flex: 1; min-width: 0; display: flex; flex-direction: column; }
.work-head { height: 50px; flex: none; display: flex; align-items: center; padding: 0 20px 2px 19px; border-bottom: 1px solid #e5e5e5; }
.work-head h1 { flex: 1; font-size: 16px; font-weight: 400; color: #252b3a; }
.progress { width: 100px; height: 4px; border-radius: 2px; background: #dbdbdb; margin-right: 15px; }
.progress i { display: block; height: 4px; border-radius: 2px; background: #c7000b; }
.completed { width: 100px; color: #444; }
.timer { width: 140px; height: 50px; border: solid #e5e5e5; border-width: 0 1px; display: flex; align-items: center; justify-content: center; font-size: 20px; font-weight: 700; color: #000; margin-right: 20px; }
.end { width: 96px; height: 32px; border-radius: 2px; background: #c7000b; color: #fff; font: 14px "Liberation Sans", sans-serif; }
.work-body { flex: 1; min-height: 0; display: flex; padding-bottom: 8px; }
.side { width: 40px; flex: none; position: relative; color: #526ecc; }
.side button { width: 40px; height: 40px; }
.side > .on { background: #e6e4f3; border-left: 2px solid #526ecc; }
.side .collapse { position: absolute; right: 0; top: 179px; width: 18px; height: 98px; }
.collapse svg { width: 18px; height: 98px; }
.tools { width: 40px; flex: none; color: #526ecc; display: flex; flex-direction: column; align-items: center; gap: 14px; padding-top: 7px; }

/* remote desktop */
.stage { flex: 1; min-width: 0; display: flex; flex-direction: column; border: solid #111; border-width: 0 5px 0 6px; background: #111; font-family: "Liberation Sans", "Noto Sans CJK SC", sans-serif; font-size: 11px; }
.ff-tabs { height: 44px; flex: none; background: #d2d2d2; display: flex; align-items: center; padding: 0 10px 0 2px; font-size: 13px; color: #333; border-bottom: 1px solid #aaa; }
.ff-view { width: 36px; height: 36px; border-radius: 4px; background: #c6c6c6; margin-right: 5px; }
.ff-tab { width: 170px; height: 36px; flex: none; display: flex; align-items: center; gap: 5px; padding: 0 11px 0 9px; margin: 0 2px; border-radius: 4px; }
.ff-tab.on { background: #dde0da; box-shadow: 0 0 3px #777; }
.ff-tab span { flex: 1; white-space: nowrap; overflow: hidden; mask-image: linear-gradient(90deg, #000 80%, transparent); }
.ff-tab.on span { mask: none; overflow: visible; }
.ff-btn { width: 40px; color: #333; }
.ff-win { margin-left: auto; display: flex; align-items: center; gap: 20px; color: #444; }
.ff-bar { height: 41px; flex: none; position: relative; background: #dde0da; border-bottom: 1px solid #999; display: flex; align-items: center; gap: 8px; padding: 0 16px 0 200px; }
.tip { position: absolute; left: 15px; top: 6px; height: 30px; padding: 0 5px; display: flex; align-items: center; border-radius: 4px; background: #161616; color: #ddd; font-size: 13px; white-space: nowrap; z-index: 1; }
.ff-url { flex: 1; min-width: 0; height: 32px; border-radius: 4px; background: #d5d8d2; display: flex; align-items: center; font-size: 14px; color: #777; padding-right: 7px; }
.ff-url span { flex: 1; margin: 0 8px 0 9px; white-space: nowrap; overflow: hidden; mask-image: linear-gradient(90deg, #000 92%, transparent); }
.ff-url b { font-weight: 400; color: #222; }
.ff-url em { font-style: normal; font-size: 12px; padding: 3px 5px; background: #c6c8c4; border-radius: 3px; margin-right: 11px; color: #333; }
.ff-tools { display: flex; align-items: center; gap: 20px; margin-left: 54px; }
.notice { height: 37px; flex: none; background: #181818; color: #ccc; display: flex; align-items: center; justify-content: center; gap: 9px; padding: 0 4px 0 190px; white-space: nowrap; }
.notice a { color: #1f6fd8; }
.hc-head { height: 42px; flex: none; background: #27292d; color: #aaa; display: flex; align-items: center; font-size: 13px; }
.burger { width: 43px; height: 42px; background: #c7000b; margin-right: 17px; }
.brand { margin-left: 12px; padding-right: 21px; border-right: 1px solid #888; }
.console { margin: 0 22px 0 21px; font-size: 13px; }
.region { display: flex; align-items: center; gap: 5px; }
.region .i10 { margin-left: 2px; }
.hc-search { margin-left: auto; width: 114px; height: 29px; border-radius: 15px; background: #2c363c; display: flex; align-items: center; gap: 5px; padding-left: 16px; color: #888; }
.more { margin: 0 22px 0 20px; }
.hc-icons { display: flex; gap: 16px; }
.faint { opacity: .4; }
.lang { display: flex; align-items: center; gap: 2px; margin: 0 4px 0 16px; }
.ma { flex: 1; min-height: 0; display: flex; background: #f2f4ee; overflow: hidden; }
.ma-nav { width: 170px; flex: none; background: #fff; position: relative; display: flex; flex-direction: column; border-right: 1px solid #ccc; }
.ma-nav h2 { font-size: 14px; line-height: 16px; padding: 15px 0 14px; margin: 0 19px 9px; border-bottom: 1px solid #ddd; }
.ma-nav label { margin-left: 19px; line-height: 14px; white-space: nowrap; }
.ma-nav select { margin: 9px 19px 8px; height: 25px; border: 1px solid #aaa; border-radius: 6px; background: #fff; padding-left: 10px; appearance: none; flex: none; }
.ma-nav a { height: 27px; flex: none; margin: 0 19px; display: flex; align-items: center; justify-content: space-between; white-space: nowrap; }
.ma-nav .sub { height: 26px; margin: 0 0 0 2px; padding-left: 35px; }
.ma-nav .sub.on { font-weight: 700; background: #f1f2ee; border-left: 2px solid #111; padding-left: 33px; height: 22px; margin-block: 2px; }
.up { transform: rotate(180deg); }
.fold { position: absolute; right: -15px; top: 140px; width: 15px; height: 73px; background: #fff; border-radius: 0 0 12px 0; border: solid #ccc; border-width: 0 1px 1px 0; color: #666; }
.fold svg { transform: rotate(90deg); }
.ma-main { flex: 1; min-width: 0; padding: 56px 0 0 20px; }
.card { background: #fff; height: 177px; overflow: hidden; border-radius: 4px; padding-left: 21px; }
.filters { height: 60px; display: flex; justify-content: flex-end; align-items: center; gap: 7px; padding-top: 7px; }
.filters select { width: 180px; height: 28px; border: 1px solid #aaa; border-radius: 6px; background: #fff; padding: 0 12px; appearance: none; background-image: linear-gradient(45deg, transparent 48%, #777 48% 58%, transparent 58%), linear-gradient(-45deg, transparent 48%, #777 48% 58%, transparent 58%); background-size: 6px 6px; background-position: right 18px center, right 13px center; background-repeat: no-repeat; }
.filters button { width: 26px; height: 25px; border: 1px solid #aaa; border-radius: 6px; }
.find { display: flex; position: relative; align-items: center; }
.find input { width: 176px; height: 25px; border: 1px solid #aaa; border-radius: 6px; padding: 0 11px; background: #fff; }
.find input::placeholder { color: #777; }
.find svg { position: absolute; right: 11px; color: #777; }
table { border-collapse: collapse; table-layout: fixed; width: 100%; white-space: nowrap; }
.c1 { width: 169px; } .c2 { width: 53px; } .c3 { width: 127px; } .c4 { width: 94px; } .c5 { width: 93px; }
th, td { text-align: left; padding: 0 0 0 15px; overflow: hidden; }
th { height: 35px; background: #f1f3ee linear-gradient(#ccc, #ccc) 0 50% / 1px 14px no-repeat; color: #444; }
th svg { display: inline-block; vertical-align: -1px; margin-left: 4px; }
td { height: 59px; padding-top: 2px; border-bottom: 1px solid #eee; }
.name { display: flex; align-items: center; gap: 10px; line-height: 15px; }
.name a, .ops a { color: #1f6fd8; }
.name a { margin-left: 15px; }
.dot { display: inline-block; width: 9px; height: 9px; border-radius: 50%; background: #3cc48a; }
.prog { display: flex; align-items: center; gap: 2px; }
.bar { width: 50px; height: 3px; background: #ddd; border-radius: 2px; }
.bar i { display: block; height: 3px; background: #63a800; border-radius: 2px; }
.ops a { margin-right: 10px; }
.ma-rail { width: 32px; flex: none; background: #fff; display: flex; flex-direction: column; align-items: center; padding-top: 37px; color: #444; border-left: 1px solid #e4e4e4; }
.smile { margin-top: 24px; }
.head { margin-top: 60px; }
.right { transform: rotate(-90deg); margin-top: 35px; color: #111; }
.vm-bar { height: 32px; flex: none; background: #181818; border-top: 1px solid #555; display: flex; align-items: center; padding-left: 8px; font-size: 13px; color: #bbb; }
.vm-bar div { height: 29px; width: 196px; display: flex; align-items: center; gap: 6px; padding: 0 0 0 5px; white-space: nowrap; overflow: hidden; }
.vm-bar .on { background: #285f96; color: #ddd; border-radius: 2px; }

/* time-out dialog */
.overlay { position: absolute; inset: 0; background: rgba(0, 0, 0, .63); display: flex; align-items: center; justify-content: center; padding-bottom: 5px; z-index: 2; }
.note { width: 400px; border-radius: 7px; padding: 6px 0 7px; background: linear-gradient(#9c9c9c 50%, #bbb 50%); box-shadow: 0 0 24px rgba(0, 0, 0, .25); }
.note-body { height: 159px; border-radius: 6px; background: #e9e9e9; padding: 22px 32px; }
.note-head { display: flex; align-items: center; gap: 10px; height: 30px; }
.warn { width: 24px; height: 30px; }
.note h2 { font-family: "Liberation Serif", serif; font-size: 18px; line-height: 20px; font-weight: 400; color: #3a3f4c; text-shadow: 0 -6px #b4b6ba; padding-top: 8px; }
.note p { color: #8a8d96; text-shadow: 0 -6px #c6c8ca; line-height: 18px; margin-top: 15px; }
.ok { width: 94px; height: 36px; border-radius: 18px; margin: 12px 1px 0 auto; background: linear-gradient(#9c9c9c 50%, #5f5f5f 50%); }
.ok span { width: 92px; height: 24px; border-radius: 12px; background: #181818; color: #e5e5e5; display: flex; align-items: center; justify-content: center; padding-top: 6px; font: 14px "Liberation Sans", sans-serif; text-shadow: 0 -6px #777; }

/* taskbar */
.taskbar { height: 40px; flex: none; display: flex; align-items: stretch; background: linear-gradient(90deg, #d9edbb 0 48px, #ebebeb 48px 66%, #dcf0c1 72% 100%); color: #111; }
.start { width: 48px; }
.find-box { width: 288px; border: 1px solid #c4c4c4; background: #fff; display: flex; align-items: center; gap: 11px; padding: 0 8px 0 12px; }
.find-box input { flex: 1; border: 0; background: none; padding: 0; font-size: 14px; outline: 0; }
.find-box input::placeholder { color: #444; opacity: 1; }
.trip { width: 66px; height: 36px; }
.app { width: 40px; margin-left: 8px; display: flex; align-items: center; justify-content: center; border-bottom: 2px solid #8bc832; }
.app.on { width: 48px; margin: 0 -3px 0 4px; background: #f8f8f8; }
.tray { margin-left: auto; display: flex; align-items: center; gap: 8px; padding-right: 24px; }
.clock { display: flex; flex-direction: column; align-items: center; font-size: 11px; line-height: 17px; margin: 0 9px 0 2px; }
```
